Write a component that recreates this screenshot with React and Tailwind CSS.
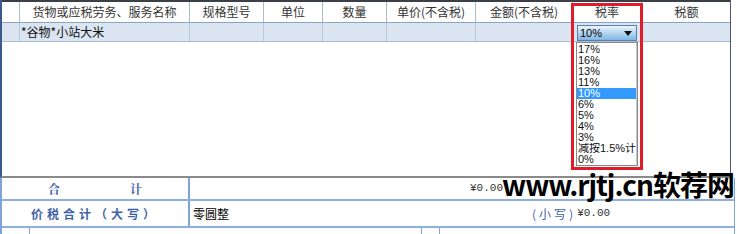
import React from 'react';

const COLS = 'grid grid-cols-[18px_170px_74px_59px_64px_89px_97px_69px_89px]';

const HEADERS = ['', '货物或应税劳务、服务名称', '规格型号', '单位', '数量', '单价(不含税)', '金额(不含税)', '税率', '税额'];

const RATES = ['17%', '16%', '13%', '11%', '10%', '6%', '5%', '4%', '3%', '减按1.5%计', '0%'];

export default function App() {
  return (
    <div className="relative w-[737px] h-[234px] overflow-hidden bg-white text-[12px] text-[#222] font-['Noto_Sans_CJK_SC',sans-serif]">
      {/* detail grid */}
      <div className="w-[731px] h-[178px] border-l-2 border-r border-b-2 border-l-[#3c5a8a] border-r-[#4a5a70] border-b-[#8a8a8a]">
        <div className={`${COLS} h-[23px] border-t-2 border-[#3a3f48] border-b border-b-[#8aa4c4]`}>
          {HEADERS.map((h, i) => (
            <div key={i} className="flex items-center justify-center border-r border-[#a9bcd3] text-[12px] text-[#333] last:border-r-0">
              {h}
            </div>
          ))}
        </div>
        <div className={`${COLS} h-[19px] bg-[#dbe5f1] border-b border-[#a9bcd3]`}>
          <div className="border-r border-[#b8c8da]" />
          <div className="flex items-center pl-px border-r border-[#b8c8da] text-[12px] text-[#111]">*谷物*小站大米</div>
          <div className="border-r border-[#b8c8da]" />
          <div className="border-r border-[#b8c8da]" />
          <div className="border-r border-[#b8c8da]" />
          <div className="border-r border-[#b8c8da]" />
          <div className="border-r border-[#b8c8da]" />
          <div className="border-r border-[#b8c8da]" />
          <div />
        </div>
      </div>

      {/* totals */}
      <div className="w-[735px] border-l-2 border-r border-[#7fa3d6]">
        <div className="grid grid-cols-[188px_1fr] h-[23px] border-b-2 border-[#8fb0dc]">
          <div className="flex items-center justify-center gap-[70px] border-r-2 border-[#7fa3d6] text-[12px] font-bold text-[#3f63a8] font-['Noto_Serif_CJK_SC','Noto_Sans_CJK_SC',serif]">
            <span>合</span>
            <span>计</span>
          </div>
          <div className="flex items-center pl-[280px] text-[11px] text-[#333] font-['Liberation_Mono','Noto_Sans_CJK_SC',monospace]">¥0.00</div>
        </div>
        <div className="grid grid-cols-[188px_1fr] h-[27px] border-b-2 border-[#8fb0dc]">
          <div className="flex items-center justify-center border-r-2 border-[#7fa3d6] text-[12px] font-bold tracking-[4px] text-[#3f63a8]">
            价税合计（大写）
          </div>
          <div className="flex items-center">
            <span className="pl-[3px] text-[12px] text-black">零圆整</span>
            <span className="ml-[303px] text-[12px] tracking-[3px] text-[#3f63a8]">(小写)</span>
            <span className="ml-[1px] text-[11px] text-[#333] font-['Liberation_Mono',monospace]">¥0.00</span>
          </div>
        </div>
        <div className="grid grid-cols-[28px_392px_18px_1fr] h-[10px]">
          <div className="border-r border-[#7fa3d6]" />
          <div className="border-r border-[#7fa3d6]" />
          <div className="border-r border-[#7fa3d6]" />
          <div />
        </div>
      </div>

      {/* rate select */}
      <div className="absolute left-[577px] top-[25px] w-[60px] h-[16px] flex items-center justify-between px-[2px] border border-[#5b7fa6] bg-gradient-to-b from-[#eaf4fd] to-[#7fb6e4] text-[11px] text-black font-['Liberation_Sans',sans-serif]">
        <span>10%</span>
        <svg width="8" height="5" viewBox="0 0 8 5" className="mr-[2px]">
          <path d="M0 0h8L4 5z" fill="#111" />
        </svg>
      </div>
      <div className="absolute left-[576px] top-[42px] w-[62px] h-[124px] flex bg-white border border-[#888]">
        <div className="flex-1 flex flex-col pt-[1px]">
          {RATES.map((r) => (
            <div
              key={r}
              className={`h-[11px] leading-[11px] pl-[1px] text-[11px] whitespace-nowrap overflow-hidden font-['Liberation_Sans','Noto_Sans_CJK_SC',sans-serif] ${
                r === '10%' ? 'bg-[#3399ff] text-white' : 'text-[#111]'
              }`}
            >
              {r}
            </div>
          ))}
        </div>
        <div className="w-[3px] bg-[#c8c8c8]" />
      </div>

      {/* red highlight */}
      <div className="absolute left-[571px] top-[3px] w-[72px] h-[167px] border-[3px] border-[#e01b2a]" />

      {/* watermark */}
      <div className="absolute left-[502px] top-[170px] whitespace-nowrap text-[28px] font-bold leading-none text-black tracking-[-1px] font-['Noto_Sans_CJK_SC',sans-serif]">
        www.rjtj.cn软荐网
      </div>
    </div>
  );
}
